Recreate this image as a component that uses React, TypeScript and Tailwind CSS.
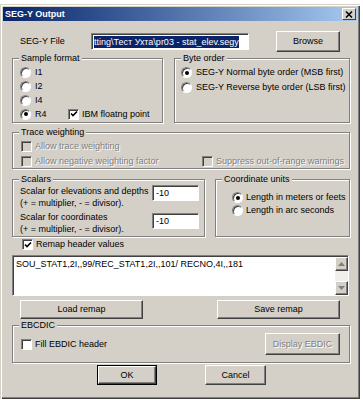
import React from "react";

const face = "font-['Liberation_Sans',Arial,sans-serif]";

function Radio({ checked }: { checked?: boolean }) {
  return (
    <span className="w-[11px] h-[11px] shrink-0 rounded-full bg-white border border-t-[#808080] border-l-[#808080] border-b-[#ffffff] border-r-[#ffffff] shadow-[inset_1px_1px_0_#404040] flex items-center justify-center">
      {checked && <span className="w-[4px] h-[4px] rounded-full bg-black" />}
    </span>
  );
}

function Check({ checked, disabled }: { checked?: boolean; disabled?: boolean }) {
  return (
    <span
      className={
        "w-[11px] h-[11px] shrink-0 border border-t-[#808080] border-l-[#808080] border-b-[#ffffff] border-r-[#ffffff] shadow-[inset_1px_1px_0_#404040] flex items-center justify-center " +
        (disabled ? "bg-[#d4d0c8]" : "bg-white")
      }
    >
      {checked && (
        <svg width="8" height="8" viewBox="0 0 8 8">
          <path d="M1 3.5 L3 5.5 L7 1.5" stroke="#000" strokeWidth="1.6" fill="none" />
        </svg>
      )}
    </span>
  );
}

function Btn({ children, className = "", disabled }: { children: React.ReactNode; className?: string; disabled?: boolean }) {
  return (
    <div
      className={
        "bg-[#d4d0c8] border border-t-[#ffffff] border-l-[#ffffff] border-b-[#404040] border-r-[#404040] shadow-[inset_-1px_-1px_0_#808080] flex items-center justify-center " +
        (disabled ? "text-[#808080] [text-shadow:1px_1px_0_#fff] " : "text-black ") +
        className
      }
    >
      {children}
    </div>
  );
}

function Group({ label, className = "", children }: { label: string; className?: string; children?: React.ReactNode }) {
  return (
    <div className={"relative border border-[#808080] shadow-[inset_1px_1px_0_#fff,1px_1px_0_#fff] " + className}>
      <span className="absolute left-[6px] top-[-7px] px-[2px] bg-[#d4d0c8] leading-[12px]">{label}</span>
      {children}
    </div>
  );
}

const dim = "text-[#808080] [text-shadow:1px_1px_0_#fff]";

export default function App() {
  return (
    <div className={"w-[363px] h-[400px] bg-white overflow-hidden text-[9px] leading-[11px] text-black " + face}>
      <div className="mt-[4px] w-[360px] h-[395px] bg-[#d4d0c8] shadow-[inset_1px_1px_0_#d4d0c8,inset_2px_2px_0_#fff,inset_-1px_-1px_0_#404040,inset_-2px_-2px_0_#808080] pt-[3px]">
        {/* title bar */}
        <div className="mx-[3px] h-[14px] bg-gradient-to-r from-[#0a246a] to-[#a6caf0] flex items-center">
          <span className="pl-[2px] text-white font-bold text-[9px]">SEG-Y Output</span>
          <div className="ml-auto mr-[1px] w-[14px] h-[12px] bg-[#d4d0c8] border border-t-[#ffffff] border-l-[#ffffff] border-b-[#404040] border-r-[#404040] flex items-center justify-center">
            <svg width="8" height="7" viewBox="0 0 8 7">
              <path d="M1 0.5 L7 6.5 M7 0.5 L1 6.5" stroke="#000" strokeWidth="1.5" />
            </svg>
          </div>
        </div>

        {/* file row */}
        <div className="mt-[10px] h-[21px] flex items-center">
          <span className="ml-[20px] w-[71px]">SEG-Y File</span>
          <div className="w-[158px] h-[17px] bg-white border border-t-[#808080] border-l-[#808080] border-b-[#ffffff] border-r-[#ffffff] shadow-[inset_1px_1px_0_#404040] flex items-center pl-[2px] pr-[1px] overflow-hidden">
            <span className="bg-[#0a246a] text-white whitespace-nowrap leading-[12px]">tting\Тест Ухта\pr03 - stat_elev.segy</span>
          </div>
          <Btn className="ml-[27px] w-[64px] h-[21px]">Browse</Btn>
        </div>

        {/* sample format / byte order */}
        <div className="mt-[6px] ml-[12px] flex">
          <Group label="Sample format" className="w-[151px] h-[65px]">
            <div className="pt-[6px] pl-[7px] flex flex-col">
              <div className="h-[14px] flex items-center gap-[4px]"><Radio /><span>I1</span></div>
              <div className="h-[14px] flex items-center gap-[4px]"><Radio /><span>I2</span></div>
              <div className="h-[14px] flex items-center gap-[4px]"><Radio /><span>I4</span></div>
              <div className="h-[14px] flex items-center">
                <div className="w-[48px] flex items-center gap-[4px]"><Radio checked /><span>R4</span></div>
                <Check checked />
                <span className="ml-[3px]">IBM floatng point</span>
              </div>
            </div>
          </Group>
          <Group label="Byte order" className="ml-[11px] w-[176px] h-[65px]">
            <div className="pt-[6px] pl-[6px] flex flex-col">
              <div className="h-[15px] flex items-center gap-[4px]"><Radio checked /><span>SEG-Y Normal byte order (MSB first)</span></div>
              <div className="h-[15px] flex items-center gap-[4px]"><Radio /><span>SEG-Y Reverse byte order (LSB first)</span></div>
            </div>
          </Group>
        </div>

        {/* trace weighting */}
        <Group label="Trace weighting" className="mt-[9px] ml-[12px] w-[338px] h-[37px]">
          <div className="pt-[6px] pl-[8px] flex flex-col gap-[1px]">
            <div className="h-[14px] flex items-center gap-[3px]"><Check disabled /><span className={dim}>Allow trace weighting</span></div>
            <div className="h-[14px] flex items-center">
              <div className="w-[181px] flex items-center gap-[3px]"><Check disabled /><span className={dim}>Allow negative weighting factor</span></div>
              <Check disabled />
              <span className={"ml-[3px] " + dim}>Suppress out-of-range warnings</span>
            </div>
          </div>
        </Group>

        {/* scalars / coordinate units */}
        <div className="mt-[10px] ml-[12px] flex">
          <Group label="Scalars" className="w-[193px] h-[58px]">
            <div className="pt-[5px] pl-[7px] flex flex-col">
              <div className="flex">
                <div className="w-[132px] leading-[12px]">
                  <div>Scalar for elevations and depths</div>
                  <div>(+ = multiplier, - = divisor).</div>
                </div>
                <div className="w-[47px] h-[16px] bg-white border border-t-[#808080] border-l-[#808080] border-b-[#ffffff] border-r-[#ffffff] shadow-[inset_1px_1px_0_#404040] pl-[3px] flex items-center">-10</div>
              </div>
              <div className="flex mt-[2px]">
                <div className="w-[132px] leading-[12px]">
                  <div>Scalar for coordinates</div>
                  <div>(+ = multiplier, - = divisor).</div>
                </div>
                <div className="mt-[2px] w-[47px] h-[16px] bg-white border border-t-[#808080] border-l-[#808080] border-b-[#ffffff] border-r-[#ffffff] shadow-[inset_1px_1px_0_#404040] pl-[3px] flex items-center">-10</div>
              </div>
            </div>
          </Group>
          <Group label="Coordinate units" className="ml-[10px] w-[135px] h-[58px]">
            <div className="pt-[11px] pl-[16px] flex flex-col">
              <div className="h-[13px] flex items-center gap-[3px]"><Radio checked /><span>Length in meters or feets</span></div>
              <div className="h-[13px] flex items-center gap-[3px]"><Radio /><span>Length in arc seconds</span></div>
            </div>
          </Group>
        </div>

        {/* remap */}
        <div className="mt-[1px] h-[13px] ml-[22px] flex items-center gap-[3px]">
          <Check checked />
          <span>Remap header values</span>
        </div>

        <div className="mt-[4px] ml-[12px] w-[337px] h-[41px] bg-white border border-t-[#808080] border-l-[#808080] border-b-[#ffffff] border-r-[#ffffff] shadow-[inset_1px_1px_0_#404040] flex">
          <div className="flex-1 pl-[3px] pt-[3px] whitespace-nowrap overflow-hidden">SOU_STAT1,2I,,99/REC_STAT1,2I,,101/ RECNO,4I,,181</div>
          <div className="w-[13px] mt-[1px] mb-[0px] flex flex-col bg-[#f0efec]">
            <Btn className="h-[14px] w-[13px]">
              <svg width="7" height="4" viewBox="0 0 7 4"><path d="M0 4 L3.5 0 L7 4 Z" fill="#808080" /></svg>
            </Btn>
            <div className="flex-1" />
            <Btn className="h-[14px] w-[13px]">
              <svg width="7" height="4" viewBox="0 0 7 4"><path d="M0 0 L3.5 4 L7 0 Z" fill="#808080" /></svg>
            </Btn>
          </div>
        </div>

        {/* load / save */}
        <div className="mt-[4px] h-[19px] flex">
          <Btn className="ml-[20px] w-[123px] h-[19px]">Load remap</Btn>
          <Btn className="ml-[74px] w-[123px] h-[19px]">Save remap</Btn>
        </div>

        {/* EBCDIC */}
        <Group label="EBCDIC" className="mt-[6px] ml-[12px] w-[338px] h-[38px]">
          <div className="pt-[7px] pl-[8px] flex items-center">
            <div className="flex items-center gap-[3px]"><Check /><span>Fill EBDIC header</span></div>
            <Btn disabled className="ml-auto mr-[9px] w-[75px] h-[22px]">Display EBDIC</Btn>
          </div>
        </Group>

        {/* OK / Cancel */}
        <div className="mt-[2px] h-[20px] flex">
          <div className="ml-[97px] w-[60px] h-[20px] border border-black flex">
            <Btn className="flex-1">OK</Btn>
          </div>
          <Btn className="ml-[48px] w-[61px] h-[20px]">Cancel</Btn>
        </div>
      </div>
    </div>
  );
}
